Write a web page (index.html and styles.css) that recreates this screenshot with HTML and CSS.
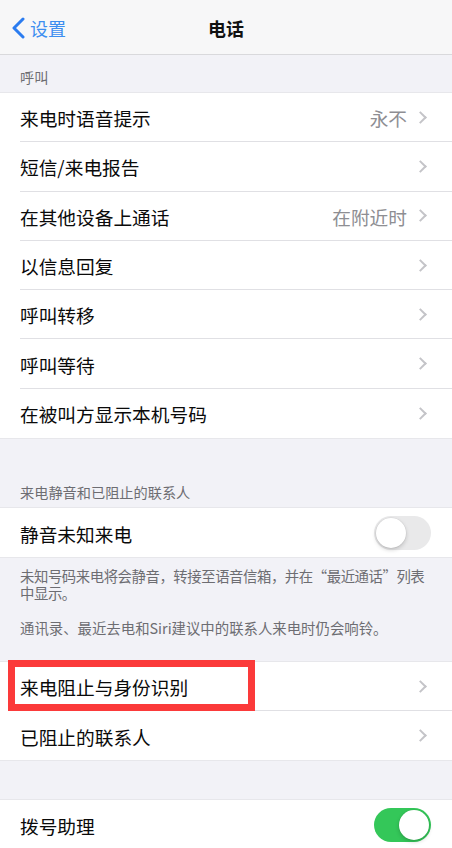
FILE: index.html
```html
<!DOCTYPE html>
<html lang="zh-CN">
<head>
<meta charset="utf-8">
<title>电话</title>
<link rel="stylesheet" href="styles.css">
</head>
<body>
<div class="page">
  <header class="nav">
    <div class="back">
      <svg class="back-icon" width="14" height="22" viewBox="0 0 14 22"><path d="M12 2 L3 11 L12 20" fill="none" stroke="#2b7cf0" stroke-width="3" stroke-linecap="round" stroke-linejoin="round"/></svg>
      <span class="back-text">设置</span>
    </div>
    <div class="title">电话</div>
    <div></div>
  </header>

  <div class="sec-head first">呼叫</div>
  <div class="group">
    <div class="row"><div class="row-in"><span class="label">来电时语音提示</span><span class="value">永不</span><span class="chev"></span></div></div>
    <div class="row"><div class="row-in"><span class="label">短信/来电报告</span><span class="chev"></span></div></div>
    <div class="row"><div class="row-in"><span class="label">在其他设备上通话</span><span class="value">在附近时</span><span class="chev"></span></div></div>
    <div class="row"><div class="row-in"><span class="label">以信息回复</span><span class="chev"></span></div></div>
    <div class="row"><div class="row-in"><span class="label">呼叫转移</span><span class="chev"></span></div></div>
    <div class="row"><div class="row-in"><span class="label">呼叫等待</span><span class="chev"></span></div></div>
    <div class="row"><div class="row-in"><span class="label">在被叫方显示本机号码</span><span class="chev"></span></div></div>
  </div>

  <div class="sec-head second">来电静音和已阻止的联系人</div>
  <div class="group">
    <div class="row"><div class="row-in toggle-row"><span class="label">静音未知来电</span><span class="switch"><span class="knob"></span></span></div></div>
  </div>
  <div class="footer">
    <p class="tight">未知号码来电将会静音，转接至语音信箱，并在“最近通话”列表<br>中显示。</p>
    <p>通讯录、最近去电和Siri建议中的联系人来电时仍会响铃。</p>
  </div>

  <div class="group">
    <div class="row highlighted"><div class="row-in"><span class="label">来电阻止与身份识别</span><span class="chev"></span></div><div class="mark"></div></div>
    <div class="row"><div class="row-in"><span class="label">已阻止的联系人</span><span class="chev"></span></div></div>
  </div>

  <div class="spacer"></div>
  <div class="group">
    <div class="row"><div class="row-in toggle-row"><span class="label">拨号助理</span><span class="switch on"><span class="knob"></span></span></div></div>
  </div>
</div>
</body>
</html>
```

FILE: styles.css
```css
html, body {
  margin: 0;
  padding: 0;
}
body {
  background: #f2f2f7;
  font-family: "Noto Sans CJK SC", "Noto Sans", sans-serif;
  color: #000;
  width: 452px;
  height: 848px;
  overflow: hidden;
}
.page {
  display: flex;
  flex-direction: column;
}
.nav {
  height: 54px;
  border-bottom: 1px solid #d9d9dc;
  background: #f7f7f8;
  display: grid;
  grid-template-columns: 1fr auto 1fr;
  align-items: center;
}
.back {
  display: flex;
  align-items: center;
  padding-left: 11px;
  padding-top: 2px;
}
.back-icon {
  display: block;
}
.back-text {
  color: #3d8ef0;
  font-size: 18px;
  line-height: 22px;
  margin-left: 5px;
}
.title {
  font-size: 18px;
  font-weight: 700;
  line-height: 22px;
  padding-top: 2px;
  color: #111;
}
.sec-head {
  font-size: 14.2px;
  line-height: 17px;
  color: #6d6d72;
  padding: 0 20px 7px;
}
.sec-head.first {
  padding-top: 14px;
}
.sec-head.second {
  padding-top: 46px;
}
.group {
  background: #fff;
  box-shadow: 0 -0.5px 0 #dcdce0, 0 0.5px 0 #dcdce0;
}
.row {
  padding-left: 20px;
  position: relative;
}
.row-in {
  height: 49.3px;
  box-sizing: border-box;
  border-bottom: 1px solid #e0e0e4;
  display: flex;
  align-items: center;
  padding-right: 24px;
  padding-top: 2px;
}
.row:last-child .row-in {
  border-bottom: none;
}
.label {
  flex: 1;
  font-size: 18.7px;
  line-height: 24px;
  color: #0a0a0a;
}
.value {
  font-size: 18.7px;
  line-height: 24px;
  color: #8e8e93;
  margin-right: 9px;
}
.chev {
  width: 7px;
  height: 7px;
  border-top: 2px solid #c4c4c8;
  border-right: 2px solid #c4c4c8;
  transform: rotate(45deg);
  margin-right: 3px;
  margin-top: -2px;
}
.toggle-row {
  padding-right: 21px;
  padding-top: 0;
}
.toggle-row .label {
  padding-top: 2px;
}
.switch {
  width: 57px;
  height: 34px;
  border-radius: 17px;
  background: #e9e9ea;
  position: relative;
  box-sizing: border-box;
}
.switch .knob {
  position: absolute;
  top: 2px;
  left: 2px;
  width: 30px;
  height: 30px;
  border-radius: 50%;
  background: #fff;
  box-shadow: 0 2px 4px rgba(0,0,0,0.18), 0 0 0 0.5px rgba(0,0,0,0.06);
}
.switch.on {
  background: #34c759;
}
.switch.on .knob {
  left: 25px;
}
.footer {
  padding: 9.5px 4px 25px 20px;
  font-size: 14.4px;
  line-height: 17.5px;
  color: #6d6d72;
}
.footer p {
  margin: 0;
}
.footer p.tight {
  letter-spacing: -0.45px;
}
.footer p + p {
  margin-top: 17.5px;
}
.mark {
  position: absolute;
  left: 8px;
  top: -2px;
  width: 247px;
  height: 51px;
  border: 7px solid #fb3a3a;
  box-sizing: border-box;
  pointer-events: none;
}
.spacer {
  height: 40px;
}
```
